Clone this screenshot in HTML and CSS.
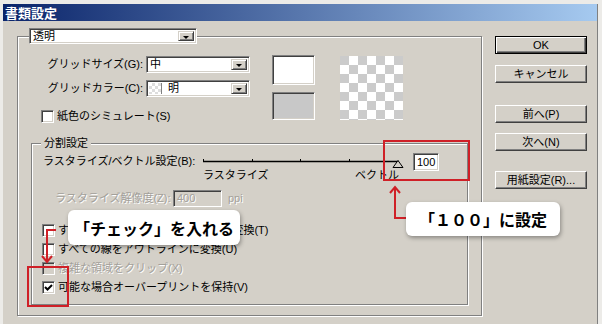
FILE: index.html
```html
<!DOCTYPE html>
<html lang="ja">
  <head>
    <meta charset="UTF-8" />
    <title>書類設定</title>
    <link rel="stylesheet" href="styles.css">
  </head>
  <body>
    <div class="window">
      <div class="titlebar">書類設定</div>
      <div class="dialog">
        <fieldset class="group main-group">
          <legend class="legend-box">
            <div class="select legend-select">
              <span class="select-value">透明</span>
              <span class="drop"></span>
            </div>
          </legend>

          <div class="grid-area">
            <div class="grid-form">
              <div class="field-row">
                <span class="field-label">グリッドサイズ(G):</span>
                <div class="select field-select">
                  <span class="select-value">中</span>
                  <span class="drop"></span>
                </div>
              </div>
              <div class="field-row">
                <span class="field-label">グリッドカラー(C):</span>
                <div class="select field-select">
                  <span class="mini-checker"></span>
                  <span class="select-value">明</span>
                  <span class="drop"></span>
                </div>
              </div>
              <div class="check-row paper-row">
                <span class="check"></span>
                <span>紙色のシミュレート(S)</span>
              </div>
            </div>
            <div class="swatches">
              <div class="swatch swatch-white"></div>
              <div class="swatch swatch-gray"></div>
            </div>
            <div class="checker"></div>
          </div>

          <fieldset class="group split-group">
            <legend class="group-title">分割設定</legend>

            <div class="slider-row">
              <span class="slider-label">ラスタライズ/ベクトル設定(B):</span>
              <div class="slider">
                <svg class="track" width="205" height="16" viewBox="0 0 205 16">
                  <line x1="2" y1="9.5" x2="198" y2="9.5" stroke="#000" stroke-width="1.4" />
                  <line x1="2.5" y1="7" x2="2.5" y2="10" stroke="#000" />
                  <line x1="51.5" y1="7" x2="51.5" y2="10" stroke="#000" />
                  <line x1="99.5" y1="7" x2="99.5" y2="10" stroke="#000" />
                  <line x1="148.5" y1="7" x2="148.5" y2="10" stroke="#000" />
                  <polygon points="197,8.5 192,15.5 202,15.5" fill="#d4d0c8" stroke="#000" stroke-width="1" />
                </svg>
                <div class="slider-ends">
                  <span>ラスタライズ</span>
                  <span>ベクトル</span>
                </div>
              </div>
              <div class="field value-field">100</div>
            </div>

            <div class="res-row">
              <span class="res-label disabled">ラスタライズ解像度(Z):</span>
              <div class="field res-field disabled">400</div>
              <span class="res-unit disabled">ppi</span>
            </div>

            <div class="check-list">
              <div class="check-row">
                <span class="check"></span>
                <span>すべてのテキストをアウトラインに変換(T)</span>
              </div>
              <div class="check-row">
                <span class="check"></span>
                <span>すべての線をアウトラインに変換(U)</span>
              </div>
              <div class="check-row">
                <span class="check check-disabled"></span>
                <span class="disabled">複雑な領域をクリップ(X)</span>
              </div>
              <div class="check-row">
                <span class="check">
                  <svg width="9" height="9" viewBox="0 0 9 9">
                    <polyline points="1,4 3.5,6.5 8,2" fill="none" stroke="#000" stroke-width="2" />
                  </svg>
                </span>
                <span>可能な場合オーバープリントを保持(V)</span>
              </div>
            </div>
          </fieldset>
        </fieldset>

        <div class="buttons">
          <button class="btn btn-default">OK</button>
          <button class="btn btn-cancel">キャンセル</button>
          <button class="btn btn-prev">前へ(P)</button>
          <button class="btn btn-next">次へ(N)</button>
          <button class="btn btn-paper">用紙設定(R)...</button>
        </div>
      </div>
    </div>

    <!-- annotations drawn over the dialog -->
    <div class="mark mark-value"></div>
    <div class="mark mark-check"></div>

    <svg class="arrow arrow-up" width="24" height="40" viewBox="385 182 24 40">
      <polyline points="406,218 395,218 395,187" fill="none" stroke="#cf2027" stroke-width="2" />
      <polyline points="390,193 395,187 400,193" fill="none" stroke="#cf2027" stroke-width="2" />
    </svg>
    <svg class="arrow arrow-down" width="20" height="40" viewBox="40 226 20 40">
      <polyline points="56,230 47,230 47,262" fill="none" stroke="#cf2027" stroke-width="2" />
      <polyline points="42,256 47,262 52,256" fill="none" stroke="#cf2027" stroke-width="2" />
    </svg>

    <div class="callout callout-check">「チェック」を入れる</div>
    <div class="callout callout-value">「１００」に設定</div>
  </body>
</html>
```

FILE: styles.css
```css
body {
  margin: 0;
  background: #ecebe8;
  font-family: "Liberation Sans", "Noto Sans CJK JP", sans-serif;
  font-size: 11px;
  line-height: 13px;
  color: #000;
}

.window {
  width: 594px;
  height: 320px;
  margin: 4px 0 0 3px;
  background: #d4d0c8;
  border-right: 1px solid #808080;
}

.titlebar {
  height: 17px;
  padding-left: 2px;
  background: linear-gradient(to right, #0a246a, #a6caf0);
  color: #fff;
  font-family: "Noto Sans CJK JP", sans-serif;
  font-weight: bold;
  font-size: 13px;
  line-height: 17px;
}

.dialog {
  display: flex;
  align-items: flex-start;
  padding: 7px 0 0 14px;
}

/* etched group boxes */
.group {
  margin: 0;
  padding: 0;
  min-width: 0;
  box-sizing: border-box;
  border: 1px solid #808080;
  box-shadow: 1px 1px 0 #fff, inset 1px 1px 0 #fff;
}

.main-group {
  width: 465px;
  height: 288px;
}

.legend-box {
  margin-left: 11px;
  padding: 0;
}

.split-group {
  width: 437px;
  height: 168px;
  margin: 12px 0 0 13px;
}

.group-title {
  margin-left: 9px;
  padding: 0 3px;
  background: #d4d0c8;
}

/* sunken fields */
.select,
.field,
.swatch,
.check {
  box-sizing: border-box;
  background: #fff;
  border: 1px solid;
  border-color: #808080 #fff #fff #808080;
  box-shadow: inset 1px 1px 0 #404040, inset -1px -1px 0 #d4d0c8;
}

.select {
  display: flex;
  align-items: center;
  height: 17px;
  padding: 2px;
}

.legend-select {
  width: 168px;
  height: 16px;
}

.select-value {
  flex: 1;
  padding-left: 1px;
}

.drop {
  position: relative;
  box-sizing: border-box;
  width: 16px;
  height: 100%;
  background: #d4d0c8;
  border: 1px solid;
  border-color: #d4d0c8 #404040 #404040 #d4d0c8;
  box-shadow: inset 1px 1px 0 #fff, inset -1px -1px 0 #808080;
}

.drop::after {
  content: "";
  position: absolute;
  left: 4px;
  top: 4px;
  border-left: 3px solid transparent;
  border-right: 3px solid transparent;
  border-top: 3px solid #000;
}

.grid-area {
  display: flex;
  align-items: flex-start;
  padding-top: 11px;
}

.grid-form {
  display: flex;
  flex-direction: column;
  gap: 7px;
  margin-top: 1px;
}

.field-row {
  display: flex;
  align-items: center;
  gap: 3px;
}

.field-label {
  width: 125px;
  text-align: right;
}

.field-select {
  width: 104px;
}

.mini-checker {
  width: 12px;
  height: 11px;
  margin-right: 5px;
  border-right: 1px solid #808080;
  background: conic-gradient(#ddd 25%, #fff 0 50%, #ddd 0 75%, #fff 0) 0 0 / 6px 6px;
}

.check-row {
  display: flex;
  align-items: center;
  gap: 3px;
  height: 19px;
}

.paper-row {
  height: 17px;
  margin: 4px 0 0 23px;
}

.check {
  display: flex;
  align-items: center;
  justify-content: center;
  width: 13px;
  height: 13px;
  padding: 0;
}

.check-disabled {
  background: #d4d0c8;
}

.swatches {
  display: flex;
  flex-direction: column;
  gap: 7px;
  margin-left: 22px;
}

.swatch {
  width: 43px;
}

.swatch-white {
  height: 30px;
}

.swatch-gray {
  height: 28px;
  background: #c8c8c8;
}

.checker {
  width: 63px;
  height: 64px;
  margin: 1px 0 0 25px;
  background: conic-gradient(#fff 25%, #cbcbcb 0 50%, #fff 0 75%, #cbcbcb 0) 0 0 / 18px 18px;
}

.slider-row {
  display: flex;
  align-items: flex-start;
  margin-top: 2px;
  height: 32px;
}

.slider-label {
  width: 158px;
  margin: 3px 0 0 11px;
}

.slider {
  width: 205px;
}

.track {
  display: block;
}

.slider-ends {
  display: flex;
  justify-content: space-between;
  padding: 1px 7px 0 2px;
}

.value-field {
  width: 26px;
  height: 18px;
  margin: 1px 0 0 7px;
  padding: 2px 0 0 3px;
}

.res-row {
  display: flex;
  align-items: center;
  height: 17px;
  margin-top: 6px;
}

.res-label {
  width: 118px;
  margin-left: 23px;
}

.res-field {
  width: 49px;
  height: 17px;
  padding: 1px 0 0 3px;
  background: #d4d0c8;
}

.res-unit {
  margin-left: 6px;
}

.disabled {
  color: #a3a09a;
  text-shadow: 1px 1px 0 #fff;
}

.check-list {
  margin: 14px 0 0 10px;
}

/* push buttons */
.buttons {
  display: flex;
  flex-direction: column;
  width: 92px;
  margin: 8px 0 0 13px;
}

.btn {
  box-sizing: border-box;
  width: 92px;
  height: 18px;
  padding: 0;
  font: inherit;
  color: #000;
  background: #d4d0c8;
  border: 1px solid;
  border-color: #fff #404040 #404040 #fff;
  box-shadow: inset -1px -1px 0 #808080;
}

.btn-default {
  border-color: #000;
  box-shadow: inset 1px 1px 0 #fff, inset -1px -1px 0 #404040, inset -2px -2px 0 #808080;
}

.btn-cancel {
  margin-top: 11px;
}

.btn-prev {
  margin-top: 22px;
}

.btn-next {
  margin-top: 10px;
}

.btn-paper {
  margin-top: 20px;
}

/* red annotation marks and callouts */
.mark {
  position: absolute;
  box-sizing: border-box;
  border: 2px solid #cf2027;
}

.mark-value {
  left: 383px;
  top: 140px;
  width: 87px;
  height: 41px;
}

.mark-check {
  left: 27px;
  top: 266px;
  width: 42px;
  height: 41px;
}

.arrow {
  position: absolute;
}

.arrow-up {
  left: 385px;
  top: 182px;
}

.arrow-down {
  left: 40px;
  top: 226px;
}

.callout {
  position: absolute;
  display: flex;
  align-items: center;
  justify-content: center;
  box-sizing: border-box;
  background: #fff;
  border-radius: 6px;
  box-shadow: 1px 2px 4px rgba(0, 0, 0, 0.35);
  font-family: "Noto Sans CJK JP", sans-serif;
  font-weight: bold;
  font-size: 16px;
  line-height: 20px;
}

.callout-check {
  left: 68px;
  top: 210px;
  width: 172px;
  height: 35px;
}

.callout-value {
  left: 406px;
  top: 202px;
  width: 154px;
  height: 34px;
}
```
